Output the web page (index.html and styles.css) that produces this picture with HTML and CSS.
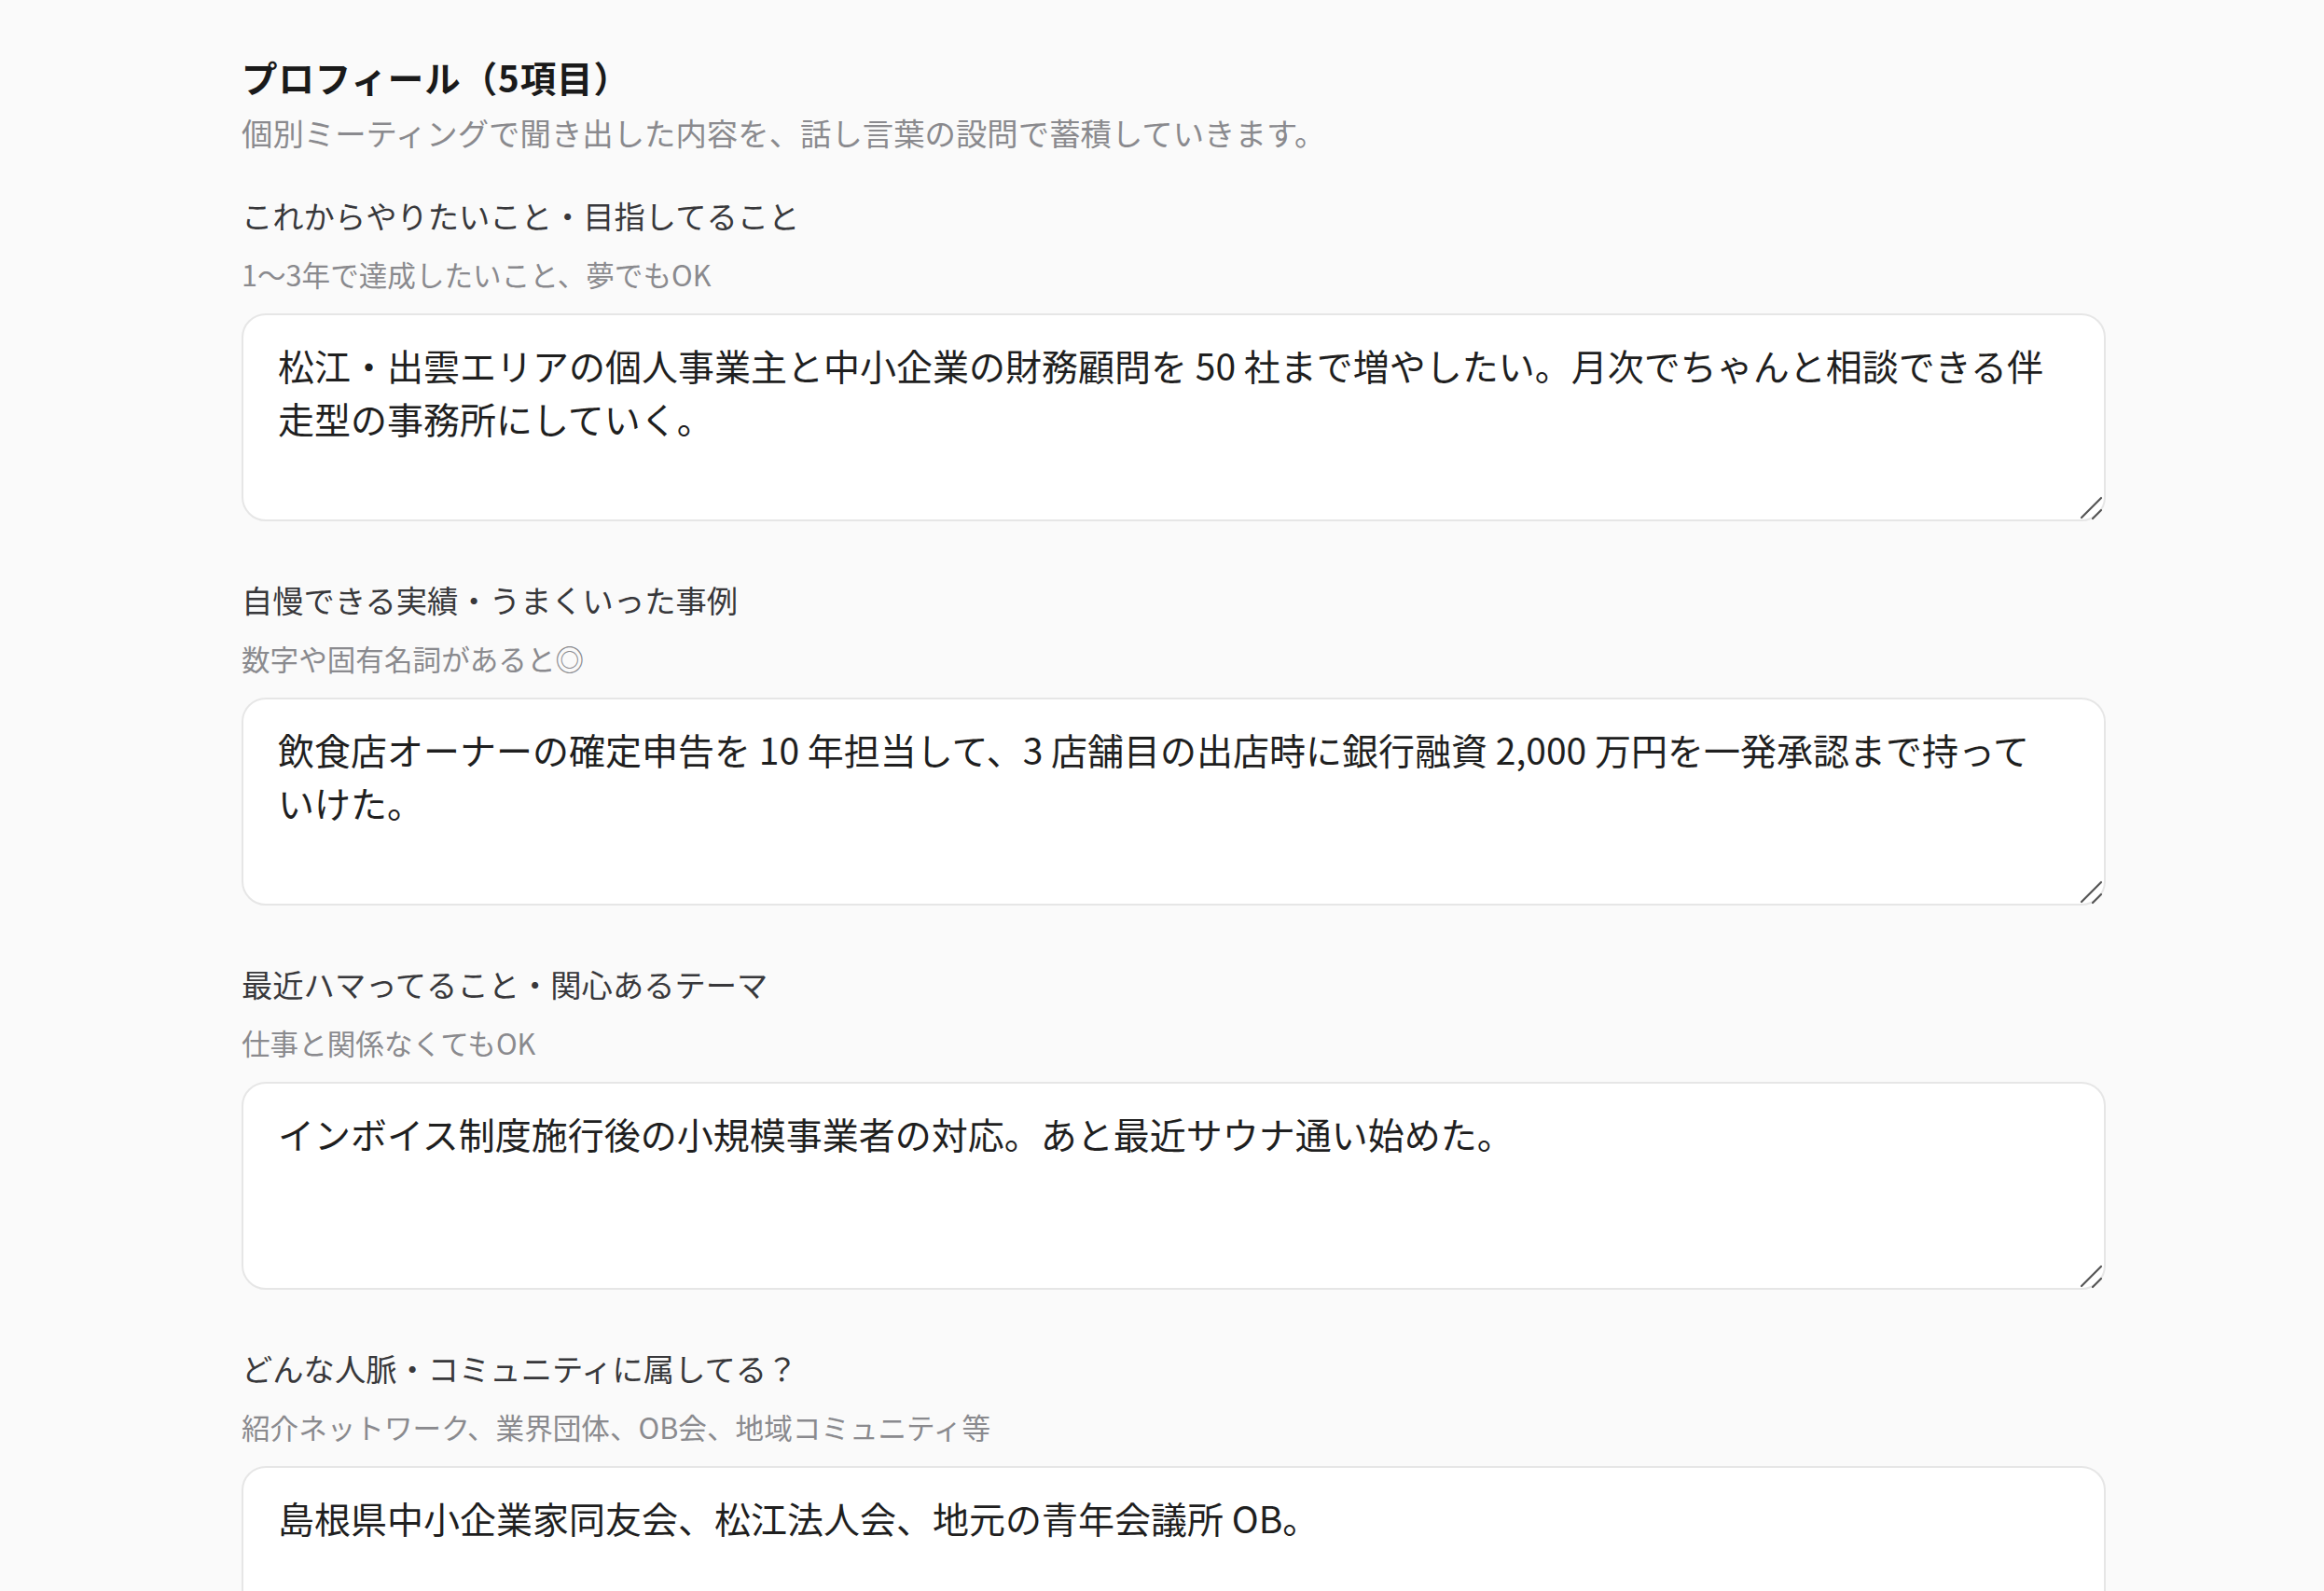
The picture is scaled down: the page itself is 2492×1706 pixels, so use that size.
FILE: index.html
```html
<!DOCTYPE html>
<html lang="ja">
<head>
<meta charset="utf-8">
<title>プロフィール</title>
<link rel="stylesheet" href="styles.css">
</head>
<body>
<main class="page">
  <header class="head">
    <h1 class="title">プロフィール（5項目）</h1>
    <p class="subtitle">個別ミーティングで聞き出した内容を、話し言葉の設問で蓄積していきます。</p>
  </header>
  <section class="fields">
    <div class="field">
      <label class="label" for="f1">これからやりたいこと・目指してること</label>
      <p class="hint">1〜3年で達成したいこと、夢でもOK</p>
      <div class="box">
        <textarea id="f1" class="answer">松江・出雲エリアの個人事業主と中小企業の財務顧問を 50 社まで増やしたい。月次でちゃんと相談できる伴走型の事務所にしていく。</textarea>
        <svg class="grip" width="28" height="28" viewBox="0 0 28 28" aria-hidden="true"><path d="M4 25 L25 4 M16 26 L25 17" stroke="#555" stroke-width="2.2" stroke-linecap="round" fill="none"/></svg>
      </div>
    </div>
    <div class="field">
      <label class="label" for="f2">自慢できる実績・うまくいった事例</label>
      <p class="hint">数字や固有名詞があると◎</p>
      <div class="box">
        <textarea id="f2" class="answer">飲食店オーナーの確定申告を 10 年担当して、3 店舗目の出店時に銀行融資 2,000 万円を一発承認まで持っていけた。</textarea>
        <svg class="grip" width="28" height="28" viewBox="0 0 28 28" aria-hidden="true"><path d="M4 25 L25 4 M16 26 L25 17" stroke="#555" stroke-width="2.2" stroke-linecap="round" fill="none"/></svg>
      </div>
    </div>
    <div class="field">
      <label class="label" for="f3">最近ハマってること・関心あるテーマ</label>
      <p class="hint">仕事と関係なくてもOK</p>
      <div class="box">
        <textarea id="f3" class="answer">インボイス制度施行後の小規模事業者の対応。あと最近サウナ通い始めた。</textarea>
        <svg class="grip" width="28" height="28" viewBox="0 0 28 28" aria-hidden="true"><path d="M4 25 L25 4 M16 26 L25 17" stroke="#555" stroke-width="2.2" stroke-linecap="round" fill="none"/></svg>
      </div>
    </div>
    <div class="field">
      <label class="label" for="f4">どんな人脈・コミュニティに属してる？</label>
      <p class="hint">紹介ネットワーク、業界団体、OB会、地域コミュニティ等</p>
      <div class="box">
        <textarea id="f4" class="answer">島根県中小企業家同友会、松江法人会、地元の青年会議所 OB。</textarea>
        <svg class="grip" width="28" height="28" viewBox="0 0 28 28" aria-hidden="true"><path d="M4 25 L25 4 M16 26 L25 17" stroke="#555" stroke-width="2.2" stroke-linecap="round" fill="none"/></svg>
      </div>
    </div>
  </section>
</main>
</body>
</html>
```
FILE: styles.css
```css
html, body {
  margin: 0;
  padding: 0;
  background: #fafafa;
}
body {
  font-family: "Noto Sans CJK JP", "Noto Sans", sans-serif;
  color: #222;
}
.page {
  width: 1999px;
  padding: 54px 0 120px 259px;
}
.head {
  display: flex;
  flex-direction: column;
}
.title {
  margin: 0;
  font-size: 38.5px;
  line-height: 56px;
  font-weight: 700;
  letter-spacing: 0.9px;
  color: #1a1a1a;
}
.subtitle {
  margin: 7.5px 0 0;
  font-size: 33.4px;
  line-height: 48px;
  color: #8a8a8e;
}
.fields {
  display: flex;
  flex-direction: column;
  gap: 60px;
  margin-top: 41.5px;
}
.field {
  display: flex;
  flex-direction: column;
}
.label {
  display: block;
  font-size: 33.3px;
  line-height: 48px;
  color: #38383b;
}
.hint {
  margin: 17px 0 20px;
  font-size: 30.6px;
  line-height: 44px;
  color: #8a8a8e;
}
.box {
  position: relative;
  display: flex;
}
.answer {
  box-sizing: border-box;
  width: 100%;
  height: 223px;
  margin: 0;
  padding: 25px 62px 25px 37px;
  border: 2px solid #e6e6e6;
  border-radius: 26px;
  background: #fff;
  font-family: "Noto Sans CJK JP", "Noto Sans", sans-serif;
  font-size: 39px;
  line-height: 56.5px;
  color: #1f1f1f;
  resize: none;
  outline: none;
}
.grip {
  position: absolute;
  right: 2px;
  bottom: 1px;
  pointer-events: none;
}
```
